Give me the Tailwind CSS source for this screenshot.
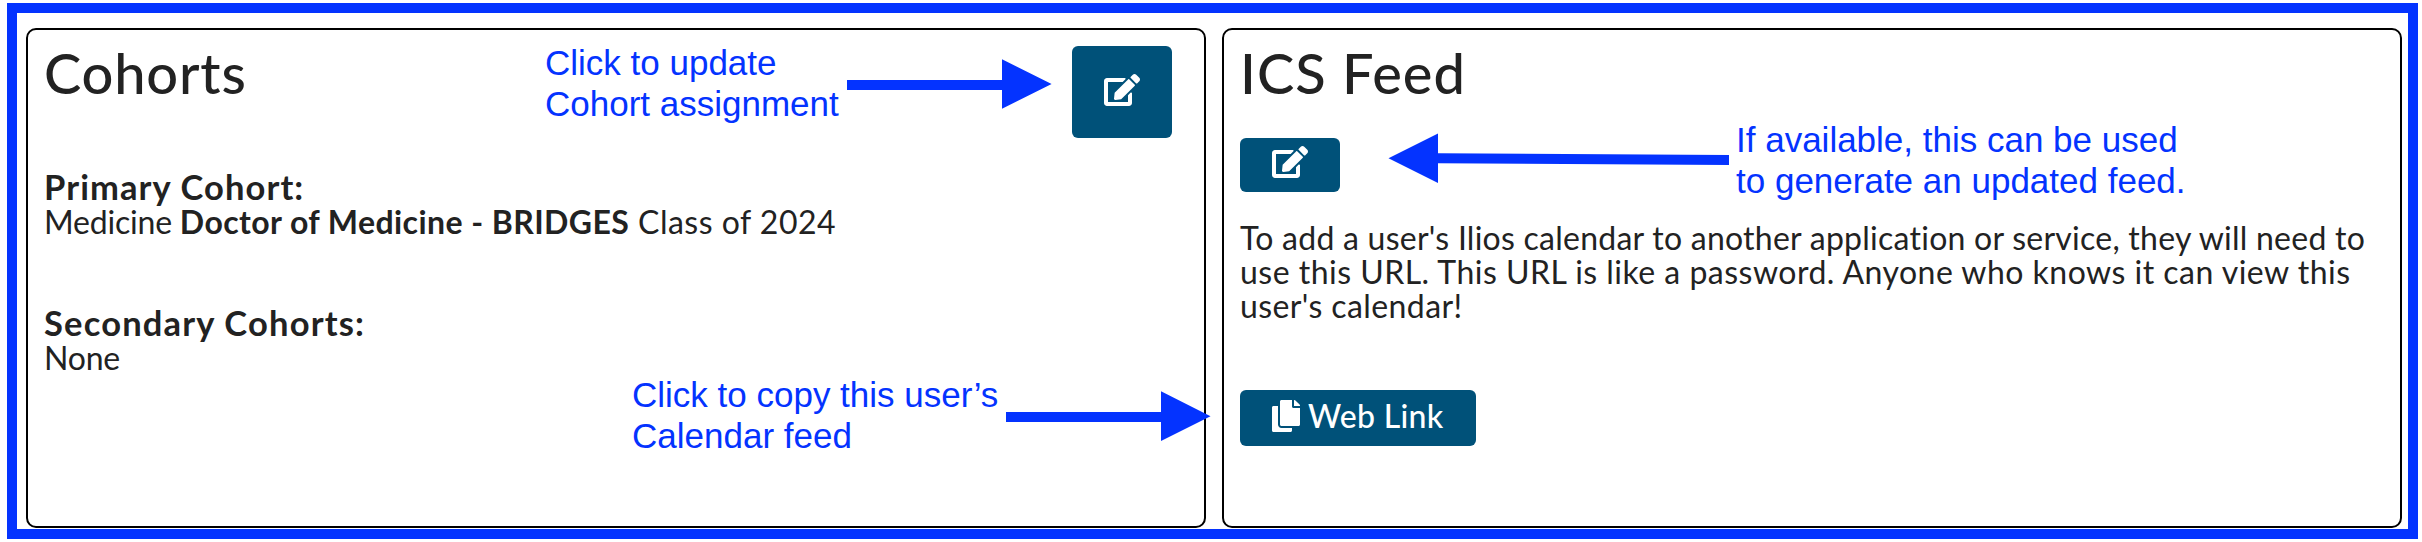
<!DOCTYPE html>
<html lang="en">
<head>
<meta charset="utf-8">
<title>Cohorts and ICS Feed</title>
<script src="https://cdn.jsdelivr.net/npm/@tailwindcss/browser@4"></script>
</head>
<body class="bg-white">
<svg class="hidden">
  <symbol id="edit" viewBox="0 0 576 512"><path fill="currentColor" d="M402.6 83.2l90.2 90.2c3.8 3.8 3.8 10 0 13.8L274.4 405.6l-92.8 10.3c-12.4 1.4-22.9-9.1-21.5-21.5l10.3-92.8L388.8 83.2c3.8-3.8 10-3.8 13.8 0zm162-22.9l-48.8-48.8c-15.2-15.2-39.9-15.2-55.2 0l-35.4 35.4c-3.8 3.8-3.8 10 0 13.8l90.2 90.2c3.8 3.8 10 3.8 13.8 0l35.4-35.4c15.2-15.3 15.2-40 0-55.2zM384 346.2V448H64V128h229.8c3.2 0 6.2-1.3 8.5-3.5l40-40c7.6-7.6 2.2-20.5-8.5-20.5H48C21.5 64 0 85.5 0 112v352c0 26.5 21.5 48 48 48h352c26.5 0 48-21.5 48-48V306.2c0-10.7-12.9-16-20.5-8.5l-40 40c-2.2 2.3-3.5 5.3-3.5 8.5z"/></symbol>
  <symbol id="copy" viewBox="0 0 448 512"><path fill="currentColor" d="M320 448v40c0 13.255-10.745 24-24 24H24c-13.255 0-24-10.745-24-24V120c0-13.255 10.745-24 24-24h72v296c0 30.879 25.121 56 56 56h168zm0-344V0H152c-13.255 0-24 10.745-24 24v368c0 13.255 10.745 24 24 24h272c13.255 0 24-10.745 24-24V128H344c-13.2 0-24-10.8-24-24zm120.971-31.029L375.029 7.029A24 24 0 0 0 358.059 0H352v96h96v-6.059a24 24 0 0 0-7.029-16.97z"/></symbol>
</svg>
<div class="relative h-[542px] w-[2422px] overflow-hidden pt-[3px] pl-[7px]">
  <main class="flex h-[536px] w-[2411px] gap-4 border-[10px] border-[#0433ff] pt-[15px] pl-[9px] font-['Lato',sans-serif] text-[32px] leading-[34px] text-[#222]">
    <section class="h-[500px] w-[1180px] rounded-[10px] border-2 border-black px-4 pt-[10px]">
      <header class="flex h-[130px] items-start justify-between">
        <h2 class="pt-px text-[56px] leading-[64px] font-medium tracking-[0.8px]">Cohorts</h2>
        <button class="mt-[6px] mr-4 flex h-[92px] w-[100px] items-center justify-center rounded-md bg-[#005179] pb-1 text-white"><svg class="h-8 w-9"><use href="#edit"/></svg></button>
      </header>
      <h3 class="text-[34.5px] leading-[34px] font-bold tracking-[1.1px]">Primary Cohort:</h3>
      <p class="mt-px whitespace-nowrap"><span class="tracking-[-0.2px]">Medicine </span><b class="font-bold tracking-[0.42px]">Doctor of Medicine - BRIDGES</b><span class="tracking-[0.5px]"> Class of 2024</span></p>
      <h3 class="mt-[67px] text-[34.5px] leading-[34px] font-bold tracking-[1.18px]">Secondary Cohorts:</h3>
      <p class="mt-px tracking-[-0.2px]">None</p>
    </section>
    <section class="h-[500px] w-[1180px] rounded-[10px] border-2 border-black px-4 pt-[10px]">
      <h2 class="pt-px text-[56px] leading-[64px] font-medium tracking-[1.02px]">ICS Feed</h2>
      <button class="mt-[33px] flex h-[54px] w-[100px] items-center justify-center rounded-md bg-[#005179] pb-1.5 text-white"><svg class="h-8 w-9"><use href="#edit"/></svg></button>
      <p class="mt-[29px] whitespace-nowrap"><span class="tracking-[0.25px]">To add a user's Ilios calendar to another application or service, they will need to</span><br><span class="tracking-[0.48px]">use this URL. This URL is like a password. Anyone who knows it can view this</span><br><span class="tracking-[0.4px]">user's calendar!</span></p>
      <button class="mt-[67px] flex h-14 w-[236px] items-center gap-2 rounded-md bg-[#005179] pb-1 pl-8 font-medium tracking-[0.3px] whitespace-nowrap text-white"><svg class="h-8 w-7"><use href="#copy"/></svg>Web Link</button>
    </section>
  </main>

  <!-- Callouts laid over the cards -->
  <div class="font-['Liberation_Sans',sans-serif] text-[35px] leading-[41px] whitespace-nowrap text-[#0433ff]">
    <p class="absolute top-[42px] left-[545px]">Click to update<br>Cohort assignment</p>
    <p class="absolute top-[374px] left-[632px]">Click to copy this user’s<br>Calendar feed</p>
    <p class="absolute top-[119px] left-[1736px]">If available, this can be used<br>to generate an updated feed.</p>
  </div>
  <svg class="absolute top-0 left-0 h-[542px] w-[2422px]" fill="#0433ff">
    <path d="M847 80H1002V59.200L1051.600 84L1002 108.800V90H847Z"/>
    <path d="M1729 155L1438 153.200V133.500L1388.500 158.200L1438 183V163.200L1729 165Z"/>
    <path d="M1006 412H1161V391.200L1210.500 416.300L1161 441V422H1006Z"/>
  </svg>
</div>
</body>
</html>
